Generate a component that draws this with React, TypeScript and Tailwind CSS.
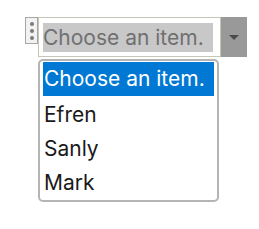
import React from 'react';

const items = ['Choose an item.', 'Efren', 'Sanly', 'Mark'];

const App: React.FC = () => {
  return (
    <div
      className="w-[259px] h-[229px] bg-white pl-[25px] pt-[17px]"
      style={{ fontFamily: 'Inter, "Noto Sans", sans-serif' }}
    >
      {/* Content control */}
      <div className="flex items-start">
        {/* Drag handle */}
        <div className="w-[13px] h-[27px] border border-[#a6a6a6] bg-[#f2f2f2] flex flex-col items-center justify-center gap-[3px]">
          <div className="w-[4px] h-[4px] rounded-full bg-[#7a7a7a]"></div>
          <div className="w-[4px] h-[4px] rounded-full bg-[#7a7a7a]"></div>
          <div className="w-[4px] h-[4px] rounded-full bg-[#7a7a7a]"></div>
        </div>
        <div className="w-[183px] h-[40px] border border-[#c6c6b6] bg-white pl-[4px] pt-[5px]">
          <div className="w-[170px] h-[29px] bg-[#c8c8c8] text-[#707070] text-[21px] leading-[29px] whitespace-nowrap">
            Choose an item.
          </div>
        </div>
        <div className="w-[26px] h-[40px] bg-[#999999] flex items-center justify-center">
          <svg width="10" height="5" viewBox="0 0 10 5">
            <path d="M0 0 L10 0 L5 5 Z" fill="#4a4a4a" />
          </svg>
        </div>
      </div>

      {/* Dropdown list */}
      <div className="mt-[2px] ml-[13px] w-[181px] h-[143px] border-2 border-[#b4b4b4] rounded-[5px] bg-white px-[3px] pt-[1px]">
        {items.map((item, i) => (
          <div
            key={item}
            className={`h-[34px] text-[21px] leading-[34px] pl-[1px] whitespace-nowrap ${
              i === 0 ? 'bg-[#0078d4] text-white h-[32px] leading-[32px] mb-[2px]' : 'text-[#1a1a1a]'
            }`}
          >
            {item}
          </div>
        ))}
      </div>
    </div>
  );
};

export default App;
